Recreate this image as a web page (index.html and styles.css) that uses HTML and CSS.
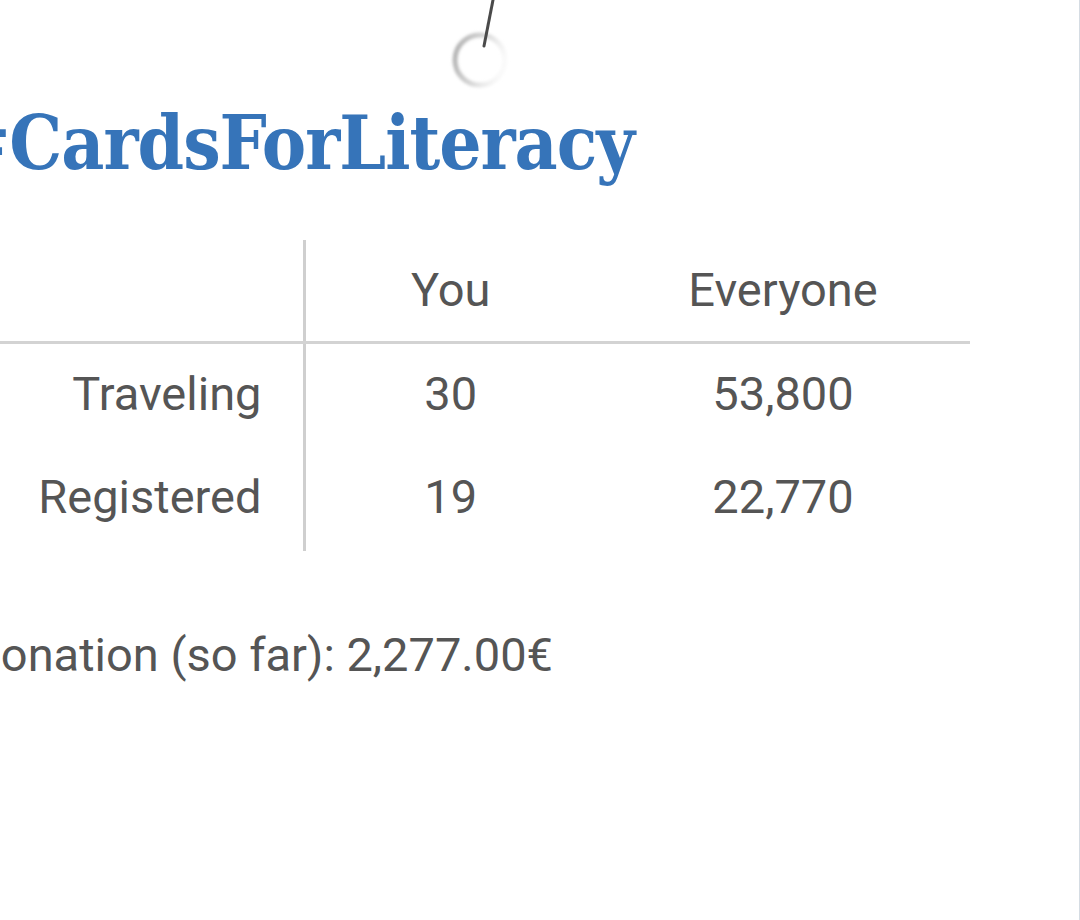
FILE: index.html
```html
<!DOCTYPE html>
<html lang="en">
<head>
    <meta charset="UTF-8">
    <meta name="viewport" content="width=device-width, initial-scale=1.0">
    <title>#CardsForLiteracy</title>
    <link rel="stylesheet" href="styles.css">
</head>
<body>
    <div class="page">
        <!-- the hanging tag string -->
        <svg class="pin" width="80" height="100" viewBox="0 0 80 100">
            <defs>
                <linearGradient id="ringFade" x1="0" y1="0.3" x2="1" y2="0.6">
                    <stop offset="0" stop-color="#b4b4b4"/>
                    <stop offset="0.5" stop-color="#d8d8d8"/>
                    <stop offset="1" stop-color="#f4f4f4" stop-opacity="0.4"/>
                </linearGradient>
                <filter id="soft" x="-30%" y="-30%" width="160%" height="160%">
                    <feGaussianBlur stdDeviation="1.8"/>
                </filter>
            </defs>
            <circle cx="40" cy="60" r="25" fill="none" stroke="url(#ringFade)" stroke-width="5" filter="url(#soft)"/>
            <line x1="53" y1="0" x2="44" y2="46" stroke="#4a4a4a" stroke-width="3" stroke-linecap="round"/>
        </svg>

        <header class="title-row">
            <h1 class="title">#CardsForLiteracy</h1>
        </header>

        <table class="stats">
            <thead>
                <tr>
                    <th class="label"></th>
                    <th>You</th>
                    <th>Everyone</th>
                </tr>
            </thead>
            <tbody>
                <tr>
                    <td class="label">Traveling</td>
                    <td>30</td>
                    <td>53,800</td>
                </tr>
                <tr>
                    <td class="label">Registered</td>
                    <td>19</td>
                    <td>22,770</td>
                </tr>
            </tbody>
        </table>

        <div class="donation">
            <p>Total donation (so far): 2,277.00€</p>
        </div>
    </div>
</body>
</html>
```

FILE: styles.css
```css
* {
    margin: 0;
    padding: 0;
    box-sizing: border-box;
}

body {
    background: #ffffff;
    color: #555555;
    font-family: Roboto, 'Noto Sans', sans-serif;
    overflow: hidden;
}

.page {
    position: relative;
    width: 1080px;
    height: 920px;
    border-right: 1px solid #d5dce3;
}

.pin {
    position: absolute;
    left: 440px;
    top: 0;
}

.title-row {
    display: flex;
    justify-content: flex-end;
    width: 634px;
    padding-top: 106px;
}

.title {
    font-family: 'DejaVu Serif Condensed', 'DejaVu Serif', 'Liberation Serif', serif;
    font-stretch: condensed;
    font-weight: bold;
    font-size: 74px;
    letter-spacing: -1px;
    line-height: 1;
    color: #3674b9;
    white-space: nowrap;
}

.stats {
    margin-top: 60px;
    border-collapse: collapse;
    font-size: 47px;
}

.stats th,
.stats td {
    font-weight: normal;
    height: 103px;
    text-align: center;
    vertical-align: middle;
    line-height: 60px;
}

.stats thead th {
    height: 102px;
    border-bottom: 3px solid #d3d3d3;
}

.stats tbody tr:last-child td {
    height: 106px;
    padding-bottom: 3px;
}

.stats th:nth-child(2),
.stats td:nth-child(2) {
    width: 292px;
}

.stats th:nth-child(3),
.stats td:nth-child(3) {
    width: 374px;
}

.stats .label {
    width: 304px;
    text-align: right;
    padding-right: 41px;
    border-right: 3px solid #cfcfcf;
}

.donation {
    display: flex;
    justify-content: flex-end;
    width: 553px;
    margin-top: 74px;
}

.donation p {
    font-size: 47px;
    line-height: 60px;
    white-space: nowrap;
}
```
